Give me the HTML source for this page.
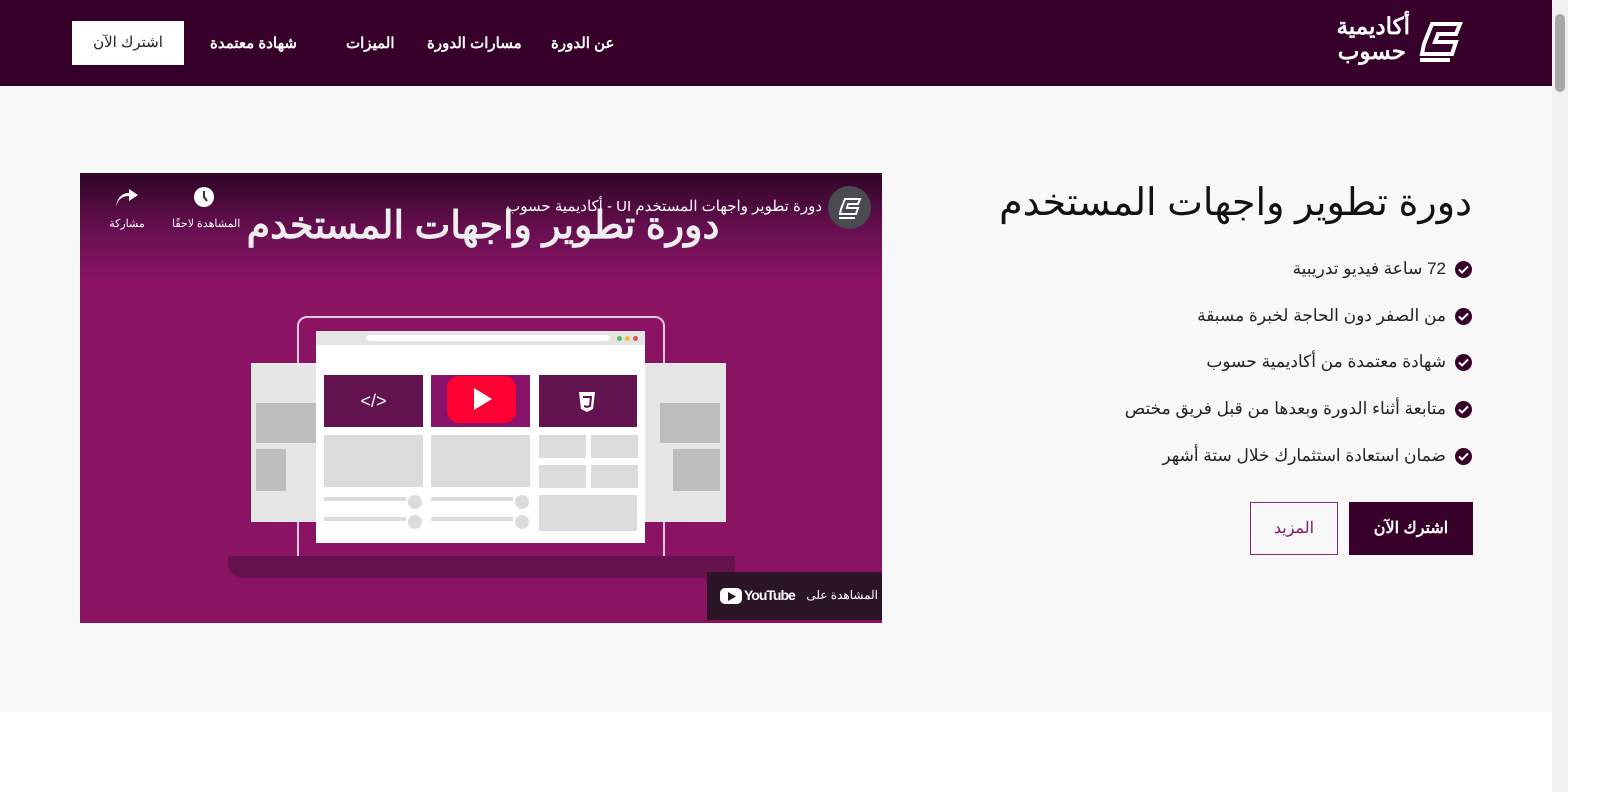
<!DOCTYPE html>
<html><head><meta charset="utf-8"><style>
*{margin:0;padding:0;box-sizing:border-box}
body{width:1600px;height:792px;overflow:hidden;background:#fff;font-family:"Liberation Sans","Noto Sans CJK SC",sans-serif;position:relative}
.a{position:absolute}
.hdr{left:0;top:0;width:1552px;height:86px;background:#37002a;box-shadow:0 1px 3px rgba(0,0,0,.3)}
.nav{color:#fff;font-size:15px;font-weight:bold;top:34px;direction:rtl;white-space:nowrap}
.main{left:0;top:86px;width:1552px;height:626px;background:#f8f8f8}
.g{background:#dcdcdc}
.li{right:128px;direction:rtl;font-size:17px;color:#222;display:flex;align-items:center;gap:9px;white-space:nowrap}
.ck{width:17px;height:17px;border-radius:50%;background:#37002a;display:inline-flex;align-items:center;justify-content:center}
</style></head><body>
<div class="a hdr"></div>
<div class="a" style="left:72px;top:21px;width:112px;height:44px;background:#fff;color:#222;font-size:15px;text-align:center;line-height:44px;direction:rtl">اشترك الآن</div>
<div class="a nav" style="left:210px">شهادة معتمدة</div>
<div class="a nav" style="left:346px">الميزات</div>
<div class="a nav" style="left:427px">مسارات الدورة</div>
<div class="a nav" style="left:551px">عن الدورة</div>
<div class="a" style="left:1314px;top:14px;color:#fff;font-weight:bold;font-size:23px;line-height:25px;direction:rtl;text-align:right;width:96px">أكاديمية<br><span style="padding-right:4px">حسوب</span></div>
<svg class="a" style="left:1416px;top:18px" width="50" height="50" viewBox="0 0 50 50"><path d="M8 26 L16 6 H44 L40 16 H22 L19 24 H40 L36 36 H6 Z" fill="none" stroke="#fff" stroke-width="4"/><path d="M4 42 H34" stroke="#fff" stroke-width="4"/></svg>
<div class="a" style="left:1552px;top:0;width:16px;height:792px;background:#f1f1f1"></div>
<div class="a" style="left:1555px;top:14px;width:10px;height:78px;background:#a8a8a8;border-radius:5px"></div>
<div class="a main"></div>
<div class="a" style="left:80px;top:173px;width:802px;height:450px;background:linear-gradient(#2e0626 0,#6a0f52 60px,#8a1463 110px,#8a1463 100%);overflow:hidden">
 <div class="a" style="left:217px;top:143px;width:368px;height:250px;border:2px solid #e0c8dc;border-radius:10px"></div>
 <div class="a" style="left:148px;top:383px;width:507px;height:22px;background:#66124f;border-radius:0 0 10px 14px"></div>
 <div class="a" style="left:171px;top:190px;width:70px;height:159px;background:#e6e6e6"></div>
 <div class="a" style="left:176px;top:230px;width:60px;height:40px;background:#bdbdbd"></div>
 <div class="a" style="left:176px;top:276px;width:30px;height:42px;background:#bdbdbd"></div>
 <div class="a" style="left:560px;top:190px;width:86px;height:159px;background:#e6e6e6"></div>
 <div class="a" style="left:580px;top:230px;width:60px;height:40px;background:#bdbdbd"></div>
 <div class="a" style="left:593px;top:276px;width:47px;height:42px;background:#bdbdbd"></div>
 <div class="a" style="left:236px;top:158px;width:329px;height:212px;background:#fff"></div>
 <div class="a" style="left:236px;top:158px;width:329px;height:14px;background:#e4e4e4"></div>
 <div class="a" style="left:286px;top:162px;width:244px;height:6px;background:#fff;border-radius:3px"></div>
 <div class="a" style="left:537px;top:163px;width:5px;height:5px;border-radius:50%;background:#5cb85c"></div>
 <div class="a" style="left:545px;top:163px;width:5px;height:5px;border-radius:50%;background:#f0c040"></div>
 <div class="a" style="left:553px;top:163px;width:5px;height:5px;border-radius:50%;background:#e05050"></div>
 <div class="a" style="left:244px;top:202px;width:99px;height:52px;background:#62124f;color:#fff;text-align:center;line-height:52px;font-size:18px">&lt;/&gt;</div>
 <div class="a" style="left:351px;top:202px;width:99px;height:52px;background:#87146a"></div>
 <div class="a" style="left:367px;top:203px;width:69px;height:47px;background:#ff0033;border-radius:12px"></div>
 <svg class="a" style="left:394px;top:215px" width="18" height="22"><path d="M0 0 L18 11 L0 22Z" fill="#fff"/></svg>
 <div class="a" style="left:459px;top:202px;width:98px;height:52px;background:#62124f"></div>
 <svg class="a" style="left:498px;top:218px" width="18" height="22"><path d="M1 1H17L15 18L9 21L3 18Z" fill="#fff"/><path d="M5 6H13L12 15L9 16L6 15" fill="none" stroke="#62124f" stroke-width="2"/></svg>
 <div class="a g" style="left:244px;top:262px;width:99px;height:52px"></div>
 <div class="a g" style="left:351px;top:262px;width:99px;height:52px"></div>
 <div class="a g" style="left:459px;top:262px;width:47px;height:23px"></div>
 <div class="a g" style="left:511px;top:262px;width:47px;height:23px"></div>
 <div class="a g" style="left:459px;top:292px;width:47px;height:23px"></div>
 <div class="a g" style="left:511px;top:292px;width:47px;height:23px"></div>
 <div class="a g" style="left:459px;top:322px;width:98px;height:36px"></div>
 <div class="a g" style="left:244px;top:324px;width:82px;height:4px"></div>
 <div class="a g" style="left:328px;top:322px;width:14px;height:14px;border-radius:50%"></div>
 <div class="a g" style="left:351px;top:324px;width:82px;height:4px"></div>
 <div class="a g" style="left:435px;top:322px;width:14px;height:14px;border-radius:50%"></div>
 <div class="a g" style="left:244px;top:344px;width:82px;height:4px"></div>
 <div class="a g" style="left:328px;top:342px;width:14px;height:14px;border-radius:50%"></div>
 <div class="a g" style="left:351px;top:344px;width:82px;height:4px"></div>
 <div class="a g" style="left:435px;top:342px;width:14px;height:14px;border-radius:50%"></div>
 <div class="a" style="left:158px;top:30px;width:490px;text-align:center;color:#eee;font-size:38px;font-weight:bold;direction:rtl;white-space:nowrap">دورة تطوير واجهات المستخدم</div>
 <div class="a" style="left:748px;top:13px;width:43px;height:43px;border-radius:50%;background:#4a4a52"></div>
 <svg class="a" style="left:757px;top:23px" width="26" height="24"><path d="M4 13L8 3H23L21 8H11L10 12H21L19 18H3Z" fill="none" stroke="#fff" stroke-width="2"/><path d="M2 22H18" stroke="#fff" stroke-width="2"/></svg>
 <div class="a" style="left:436px;top:24px;width:306px;text-align:right;color:#fff;font-size:15px;direction:rtl;white-space:nowrap">دورة تطوير واجهات المستخدم UI - أكاديمية حسوب</div>
 <div class="a" style="left:114px;top:14px;width:20px;height:20px;border-radius:50%;background:#fff"></div>
 <svg class="a" style="left:114px;top:14px" width="20" height="20"><path d="M10 4V10L13 14" stroke="#333" stroke-width="2" fill="none"/></svg>
 <div class="a" style="left:92px;top:44px;width:66px;text-align:center;color:#fff;font-size:11px;white-space:nowrap">المشاهدة لاحقًا</div>
 <svg class="a" style="left:36px;top:16px" width="22" height="18"><path d="M0 18C2 9 8 7 13 7V12L22 6L13 0V4C6 4 1 9 0 18Z" fill="#fff"/></svg>
 <div class="a" style="left:26px;top:44px;width:42px;text-align:center;color:#fff;font-size:11px">مشاركة</div>
 <div class="a" style="left:627px;top:399px;width:175px;height:48px;background:#2c1427"></div>
 <div class="a" style="left:640px;top:415px;width:22px;height:16px;background:#fff;border-radius:5px"></div>
 <svg class="a" style="left:648px;top:419px" width="8" height="9"><path d="M0 0L8 4.5L0 9Z" fill="#2c1427"/></svg>
 <div class="a" style="left:664px;top:414px;color:#fff;font-weight:bold;font-size:14px;letter-spacing:-1px;white-space:nowrap">YouTube</div>
 <div class="a" style="left:722px;top:415px;width:76px;text-align:right;color:#fff;font-size:12px;direction:rtl;white-space:nowrap">المشاهدة على</div>
</div>
<div class="a" style="right:128px;top:180px;font-size:38px;color:#111;direction:rtl;white-space:nowrap">دورة تطوير واجهات المستخدم</div>
<div class="a li" style="top:259px"><span class="ck"><svg width="11" height="9"><path d="M1 4.5L4 7.5L10 1.5" stroke="#fff" stroke-width="2" fill="none"/></svg></span>72 ساعة فيديو تدريبية</div>
<div class="a li" style="top:306px"><span class="ck"><svg width="11" height="9"><path d="M1 4.5L4 7.5L10 1.5" stroke="#fff" stroke-width="2" fill="none"/></svg></span>من الصفر دون الحاجة لخبرة مسبقة</div>
<div class="a li" style="top:352px"><span class="ck"><svg width="11" height="9"><path d="M1 4.5L4 7.5L10 1.5" stroke="#fff" stroke-width="2" fill="none"/></svg></span>شهادة معتمدة من أكاديمية حسوب</div>
<div class="a li" style="top:399px"><span class="ck"><svg width="11" height="9"><path d="M1 4.5L4 7.5L10 1.5" stroke="#fff" stroke-width="2" fill="none"/></svg></span>متابعة أثناء الدورة وبعدها من قبل فريق مختص</div>
<div class="a li" style="top:446px"><span class="ck"><svg width="11" height="9"><path d="M1 4.5L4 7.5L10 1.5" stroke="#fff" stroke-width="2" fill="none"/></svg></span>ضمان استعادة استثمارك خلال ستة أشهر</div>
<div class="a" style="left:1349px;top:502px;width:124px;height:53px;background:#37002a;color:#fff;font-size:16px;font-weight:bold;text-align:center;line-height:53px;direction:rtl">اشترك الآن</div>
<div class="a" style="left:1250px;top:502px;width:88px;height:53px;border:1px solid #8a2a70;color:#8a1463;font-size:16px;text-align:center;line-height:51px">المزيد</div>
</body></html>
